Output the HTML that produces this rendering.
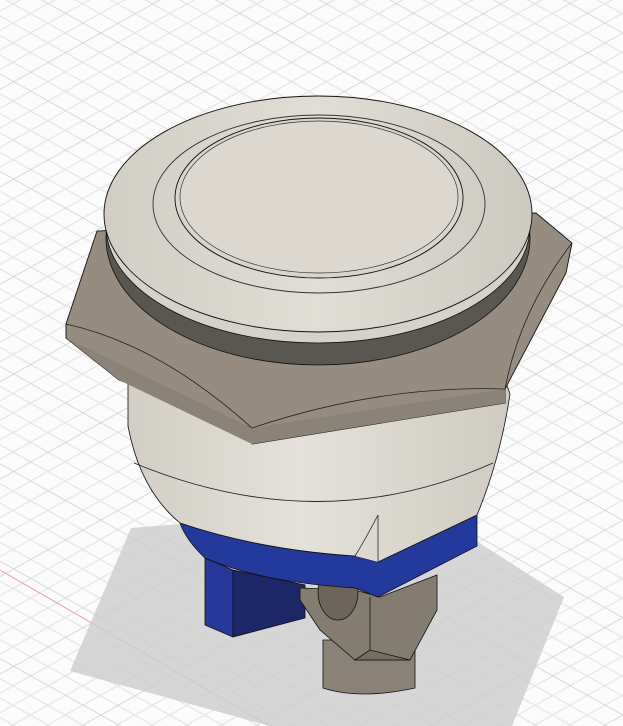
<!DOCTYPE html>
<html><head><meta charset="utf-8"><style>
html,body{margin:0;padding:0;background:#fbfbfb;}
svg{display:block}
</style></head><body>
<svg width="623" height="726" viewBox="0 0 623 726" xmlns="http://www.w3.org/2000/svg">
<defs>
<pattern id="g" width="87" height="87" patternUnits="userSpaceOnUse" patternTransform="matrix(1,0.56,1,-0.56,100,33)">
<path d="M17.4 0V87M34.8 0V87M52.2 0V87M69.6 0V87M0 17.4H87M0 34.8H87M0 52.2H87M0 69.6H87" stroke="#e6e6e6" stroke-width="1.3" fill="none"/>
<path d="M0 0H87M0 0V87" stroke="#cfcfcf" stroke-width="1.5" fill="none"/>
</pattern>
<linearGradient id="cap" x1="0" y1="0" x2="1" y2="0">
<stop offset="0" stop-color="#d2cec6"/><stop offset="0.5" stop-color="#e0ddd5"/><stop offset="1" stop-color="#cdc9c0"/>
</linearGradient>
<linearGradient id="body" x1="0" y1="0" x2="1" y2="0">
<stop offset="0" stop-color="#d2cec5"/><stop offset="0.45" stop-color="#e4e1da"/><stop offset="1" stop-color="#cfcbc2"/>
</linearGradient>
</defs>
<rect width="623" height="726" fill="#fbfbfb"/>
<rect width="623" height="726" fill="url(#g)"/>
<line x1="0" y1="570" x2="270" y2="726" stroke="#e8a0a0" stroke-width="1"/>
<!-- shadow -->
<polygon points="131,528 420,505 564,597 512,726 270,726 70,671" fill="#cfcfcf" opacity="0.85"/>
<!-- blue tab -->
<polygon points="205,558 233,570 233,637 205,625" fill="#26399a" stroke="#111" stroke-width="0.8"/>
<polygon points="233,570 305,585 305,618 233,637" fill="#1b2766" stroke="#111" stroke-width="0.8"/>
<!-- terminal -->
<path d="M323,640 L323,688 Q360,700 415,688 L415,640 Z" fill="#8a8276" stroke="#111" stroke-width="0.8"/>
<polygon points="300,588 355,590 380,597 437,575 437,610 410,660 355,660 320,630 300,600" fill="#857c70" stroke="#111" stroke-width="0.8"/>
<line x1="370" y1="597" x2="370" y2="650" stroke="#111" stroke-width="0.8"/>
<polygon points="355,660 370,650 410,660" fill="#756d62" stroke="#111" stroke-width="0.8"/>
<ellipse cx="338" cy="592" rx="20" ry="28" fill="#6d655b" stroke="#111" stroke-width="0.8"/>
<!-- blue band -->
<path d="M180,523 Q260,550 355,556 L378,562 L477,515 L477,546 L378,597 L355,588 Q260,582 205,558 Q186,540 180,523 Z" fill="#233a9c" stroke="#111" stroke-width="0.8"/>
<!-- body -->
<path d="M128,380 L128,426 Q140,490 180,523 Q260,550 355,556 L378,562 L477,515 Q500,460 510,394 L505,380 Z" fill="url(#body)" stroke="#111" stroke-width="0.8"/>
<path d="M134,463 Q320,540 493,463" fill="none" stroke="#222" stroke-width="0.9"/>
<path d="M355,556 Q365,540 378,515 L378,562" fill="#ddd9d1" stroke="#222" stroke-width="0.8"/>
<!-- hex nut -->
<polygon points="97,231 66,324 66,338 119,380 252,428 252,444 505,403 505,389 566,273 572,243 536,213" fill="#968d80" stroke="#111" stroke-width="0.9"/>
<polygon points="66,338 252,428 252,444 119,380" fill="#8b8377"/>
<polygon points="252,428 505,389 505,403 252,444" fill="#8b8377"/>
<path d="M66,324 Q160,345 252,428 M252,428 Q380,385 505,389 M505,389 Q520,310 572,243" fill="none" stroke="#222" stroke-width="0.8"/>
<!-- groove ring -->
<ellipse cx="318" cy="238" rx="212" ry="127" fill="#5a5650" stroke="#111" stroke-width="0.8"/>
<!-- cap side -->
<path d="M104,212 L106,226 A212,117 0 0 0 530,226 L532,212 Z" fill="#d6d2ca" stroke="#111" stroke-width="0.8"/>
<!-- cap top -->
<ellipse cx="318" cy="214" rx="214" ry="118" fill="url(#cap)" stroke="#111" stroke-width="0.9"/>
<ellipse cx="319" cy="204" rx="166" ry="89" fill="none" stroke="#333" stroke-width="0.9"/>
<ellipse cx="319" cy="198" rx="144" ry="80" fill="#d9d5cc" stroke="#111" stroke-width="0.9"/>
<ellipse cx="319" cy="197" rx="139" ry="76" fill="#dcd8cf" stroke="#333" stroke-width="0.7"/>
</svg>
</body></html>
